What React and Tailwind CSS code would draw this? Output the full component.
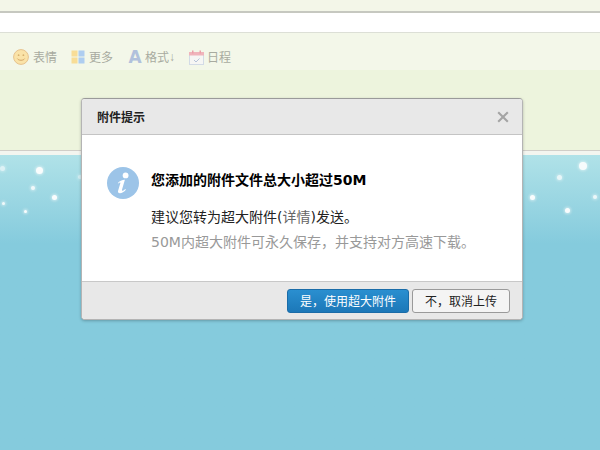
const FONT = "font-['DejaVu_Sans','Noto_Sans_CJK_SC',sans-serif]";

const stars = [
  [2, 168, 5, 0.6], [39, 170, 7, 0.95], [33, 188, 4, 0.85], [54, 197, 5, 0.95], [3, 203, 3, 0.85], [25, 211, 3, 0.95], [80, 177, 4, 0.5],
  [583, 166, 8, 0.9], [559, 177, 5, 0.75], [532, 197, 5, 0.95], [595, 197, 4, 0.8], [567, 210, 5, 0.95],
];

function Star({ x, y, s, o }) {
  return (
    <span
      className="absolute rounded-full bg-white shadow-[0_0_3px_1px_rgba(255,255,255,0.55)]"
      style={{ left: x - s / 2, top: y - 155 - s / 2, width: s, height: s, opacity: o }}
    />
  );
}

function Smile() {
  return (
    <svg width="16" height="16" viewBox="0 0 16 16" className="shrink-0">
      <circle cx="8" cy="8" r="7.4" fill="#fae3a8" stroke="#e6c28e" strokeWidth="1" />
      <circle cx="5.6" cy="6.2" r="0.9" fill="#d6b06e" />
      <circle cx="10.4" cy="6.2" r="0.9" fill="#d6b06e" />
      <path d="M4.4 9.6c1 2.2 6.2 2.2 7.2 0" fill="none" stroke="#d6a868" strokeWidth="1" />
    </svg>
  );
}

function Grid() {
  return (
    <svg width="14" height="14" viewBox="0 0 14 14" className="shrink-0">
      <rect x="0.5" y="0.5" width="6" height="6" fill="#f8dd97" />
      <rect x="7.5" y="0.5" width="6" height="6" fill="#aecdf0" />
      <rect x="0.5" y="7.5" width="6" height="6" fill="#f8dd97" />
      <rect x="7.5" y="7.5" width="6" height="6" fill="#aecdf0" />
    </svg>
  );
}

function Cal() {
  return (
    <svg width="15" height="15" viewBox="0 0 15 15" className="shrink-0">
      <rect x="0.5" y="2.5" width="14" height="12" fill="#f6f6f4" stroke="#d3dbe6" />
      <rect x="0" y="2" width="15" height="3.5" fill="#f0b4bb" />
      <rect x="3" y="0.5" width="1.5" height="3" fill="#eba0aa" />
      <rect x="10.5" y="0.5" width="1.5" height="3" fill="#eba0aa" />
      <path d="M5 10l2 2 3.5-3.5" fill="none" stroke="#b6c3d8" strokeWidth="1" />
    </svg>
  );
}

function InfoIcon() {
  return (
    <svg width="32" height="32" viewBox="0 0 32 32" className="shrink-0">
      <circle cx="16" cy="16" r="16" fill="#9cc4e8" />
      <circle cx="18.6" cy="8.4" r="2.9" fill="#fff" />
      <path d="M11.5 15.2c2-1.7 4.4-2.6 6.4-2.4l-3 10.2c-.2.9.7 1 1.5.5l2-1.4.5.7c-1.8 2-4 3.4-6 3.4-1.6 0-2.2-.9-1.8-2.4l2.3-7.8c.1-.6-.4-.7-1-.3l-1.6 1z" fill="#fff" />
    </svg>
  );
}

export default function App() {
  return (
    <div className={`relative w-[600px] h-[450px] overflow-hidden flex flex-col bg-[#85cbdd] ${FONT}`}>
      <div className="h-[11px] shrink-0 bg-[#f3f6e8]" />
      <div className="h-[22px] shrink-0 bg-white border-t-2 border-b border-t-[#c6c8c0] border-b-[#dcdfd6]" />
      <div className="h-[37px] shrink-0 bg-[#f3f7e9] flex items-center pl-[13px] pt-[11px] text-xs text-[#a8aba0] font-['Noto_Sans_CJK_SC',sans-serif]">
        <div className="flex items-center gap-1"><Smile /><span>表情</span></div>
        <div className="flex items-center gap-1 ml-[14px]"><Grid /><span>更多</span></div>
        <div className="flex items-center gap-[3px] ml-[15px]">
          <span className="w-[14px] text-center text-[17px] leading-none font-bold text-[#b1c1dc] font-['DejaVu_Sans',sans-serif]">A</span>
          <span>格式</span>
          <span className="-ml-[3px] w-[6px] text-[12px] leading-none overflow-hidden flex justify-center font-['Liberation_Sans',sans-serif]">↓</span>
        </div>
        <div className="flex items-center gap-[3px] ml-[14px]"><Cal /><span>日程</span></div>
      </div>
      <div className="h-[81px] shrink-0 bg-[#edf4dd] border-b border-b-[#d0cec8]" />
      <div className="h-[4px] shrink-0 bg-[#f3f5ef]" />
      <div className="relative flex-1 bg-gradient-to-b from-[#b0e2e8] to-[#85cbdd] to-[30%]">
        {stars.map(([x, y, s, o], i) => (
          <Star key={i} x={x} y={y} s={s} o={o} />
        ))}
      </div>

      <div className="absolute left-[81px] top-[98px] w-[442px] h-[222px] flex flex-col rounded-[4px] overflow-hidden border border-[#b4b4b4] border-t-[#9a9a9a] bg-white shadow-[0_1px_3px_rgba(0,0,0,0.25)]">
        <div className="h-[36px] shrink-0 flex items-center justify-between pl-[15px] pr-[13px] bg-[#e8e8e8] border-b border-b-[#c4c4c4]">
          <span className="text-xs font-bold text-[#222] font-['Noto_Sans_CJK_SC',sans-serif]">附件提示</span>
          <svg width="12" height="12" viewBox="0 0 12 12">
            <path d="M1.2 1.2l9.6 9.6M10.8 1.2l-9.6 9.6" stroke="#a4a4a4" strokeWidth="2.1" fill="none" />
          </svg>
        </div>
        <div className="flex-1 flex items-start pl-[25px] pt-[32px] gap-[12px]">
          <InfoIcon />
          <div className="flex flex-col text-sm">
            <div className="h-[20px] leading-[20px] mt-[3px] font-bold text-black">您添加的附件文件总大小超过50M</div>
            <div className="h-[20px] leading-[20px] mt-[17px] text-[#222]">
              建议您转为超大附件(<span className="text-[#666]">详情</span>)发送。
            </div>
            <div className="h-[20px] leading-[20px] mt-[5px] text-[#999]">50M内超大附件可永久保存，并支持对方高速下载。</div>
          </div>
        </div>
        <div className="h-[38px] shrink-0 flex items-center justify-end gap-[3px] pr-[12px] bg-[#e8e8e8] border-t border-t-[#c8c8c8]">
          <button className="w-[122px] h-[24px] rounded-[3px] border border-[#1a6ca8] bg-gradient-to-b from-[#2a8fd0] to-[#1c78b8] text-xs text-white font-['Noto_Sans_CJK_SC',sans-serif]">是，使用超大附件</button>
          <button className="w-[98px] h-[24px] rounded-[3px] border border-[#9a9a9a] bg-[#f4f4f4] text-xs text-[#222] font-['Noto_Sans_CJK_SC',sans-serif]">不，取消上传</button>
        </div>
      </div>
    </div>
  );
}
